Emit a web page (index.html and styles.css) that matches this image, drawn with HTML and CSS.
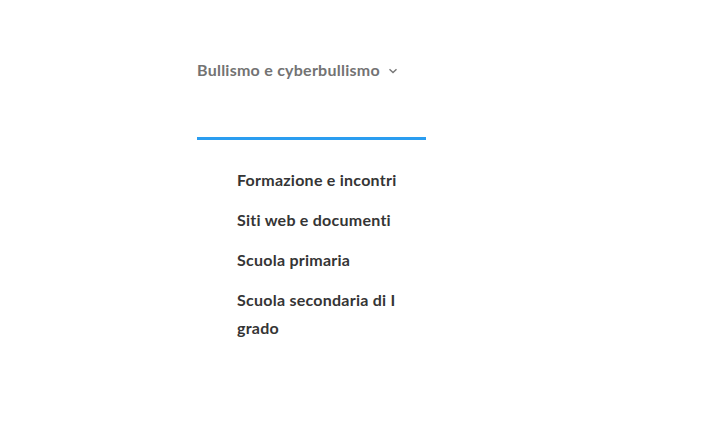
FILE: index.html
```html
<!DOCTYPE html>
<html lang="it">
<head>
<meta charset="utf-8">
<title>Menu</title>
<link rel="stylesheet" href="styles.css">
</head>
<body>
<nav class="nav">
  <div class="nav-item">
    <a class="nav-link" href="#">Bullismo e cyberbullismo
      <svg class="chev" width="10" height="6" viewBox="0 0 10 6"><path d="M1.5 1.2 L5 4.6 L8.5 1.2" fill="none" stroke="#777" stroke-width="1.4"/></svg>
    </a>
    <div class="dropdown">
      <ul class="menu">
        <li><a href="#">Formazione e incontri</a></li>
        <li><a href="#">Siti web e documenti</a></li>
        <li><a href="#">Scuola primaria</a></li>
        <li><a href="#">Scuola secondaria di I grado</a></li>
      </ul>
    </div>
  </div>
</nav>
</body>
</html>
```
FILE: styles.css
```css
html, body {
  margin: 0;
  padding: 0;
  background: #fff;
}
body {
  font-family: Lato, "Noto Sans", sans-serif;
}
.nav {
  padding: 59px 0 0 197px;
}
.nav-item {
  width: 229px;
}
.nav-link {
  display: flex;
  align-items: center;
  gap: 8px;
  color: #737373;
  font-size: 16px;
  font-weight: 700;
  letter-spacing: 0.25px;
  line-height: 22px;
  text-decoration: none;
}
.chev {
  margin-top: 2px;
}
.dropdown {
  margin-top: 56px;
  border-top: 3px solid #2a9df0;
}
.menu {
  list-style: none;
  margin: 0;
  padding: 26px 0 0 40px;
}
.menu li {
  margin-bottom: 12px;
}
.menu a {
  color: #353535;
  font-size: 16px;
  font-weight: 700;
  letter-spacing: 0.25px;
  line-height: 28px;
  text-decoration: none;
  display: block;
}
```
